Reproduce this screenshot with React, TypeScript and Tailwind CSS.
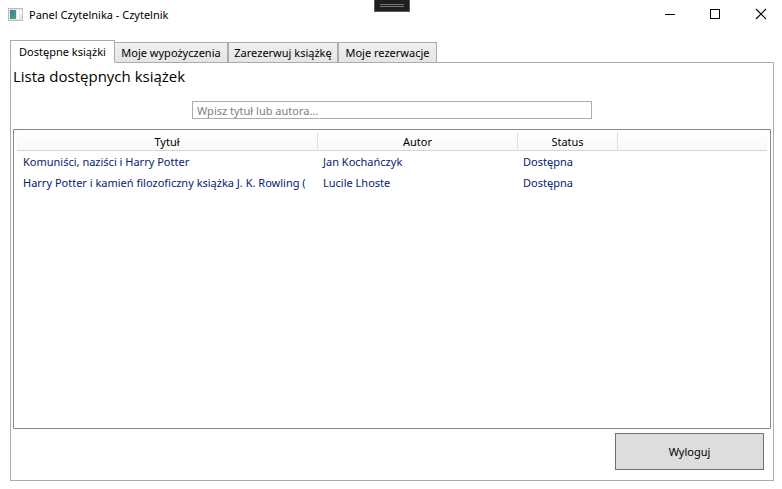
import { useState } from "react";

const tabs = [
  { label: "Dostępne książki", width: "w-[105px]" },
  { label: "Moje wypożyczenia", width: "w-[113px]" },
  { label: "Zarezerwuj książkę", width: "w-[110px]" },
  { label: "Moje rezerwacje", width: "w-[99px]" },
];

const books = [
  { title: "Komuniści, naziści i Harry Potter", author: "Jan Kochańczyk", status: "Dostępna" },
  {
    title: "Harry Potter i kamień filozoficzny książka J. K. Rowling (",
    author: "Lucile Lhoste",
    status: "Dostępna",
  },
];

function AppIcon() {
  return (
    <svg width="15" height="13" viewBox="0 0 15 13" shapeRendering="crispEdges" aria-hidden="true">
      <defs>
        <linearGradient id="screen" x1="0" y1="0" x2="1" y2="1">
          <stop offset="0" stopColor="#3f78b0" />
          <stop offset="1" stopColor="#4fa673" />
        </linearGradient>
      </defs>
      <rect x="0.5" y="0.5" width="14" height="12" fill="#e6e9ec" stroke="#b9bcc2" />
      <rect x="2" y="2" width="6" height="9" fill="url(#screen)" />
      <rect x="9" y="2" width="2" height="9" fill="#ffffff" />
      <rect x="12" y="2" width="2" height="5" fill="#ffffff" />
    </svg>
  );
}

function TitleBar() {
  return (
    <header className="relative flex h-7 shrink-0 items-center pl-2">
      <AppIcon />
      <h1 className="ml-1.5 flex-1 pt-0.5 leading-4">Panel Czytelnika - Czytelnik</h1>
      <div className="absolute top-0 left-1/2 flex h-3 w-9 -translate-x-[17px] flex-col items-center justify-center gap-px border border-t-0 border-[#5c5c5c] bg-[#1f1f1f]">
        <span className="h-px w-6 bg-[#777777]" />
        <span className="h-px w-6 bg-[#777777]" />
      </div>
      <button type="button" aria-label="Minimalizuj" className="flex h-7 w-[45px] items-center justify-center">
        <svg width="10" height="10" viewBox="0 0 10 10" shapeRendering="crispEdges">
          <path d="M0 5.5H10" stroke="#000" />
        </svg>
      </button>
      <button type="button" aria-label="Maksymalizuj" className="flex h-7 w-[45px] items-center justify-center">
        <svg width="10" height="10" viewBox="0 0 10 10" shapeRendering="crispEdges">
          <rect x="0.5" y="0.5" width="9" height="9" fill="none" stroke="#000" />
        </svg>
      </button>
      <button type="button" aria-label="Zamknij" className="flex h-7 w-[45px] items-center justify-center">
        <svg width="10" height="10" viewBox="0 0 10 10" overflow="visible">
          <path d="M1 0L11 10M11 0L1 10" stroke="#000" strokeWidth="1.1" />
        </svg>
      </button>
    </header>
  );
}

export default function App() {
  const [active, setActive] = useState(0);
  const [query, setQuery] = useState("");
  const head = "h-[19px] border-b border-[#d5d5d5] p-0 pt-0.5 text-center font-normal leading-4";
  const divided = "border-l border-l-[#e0e0e0]";
  const cell = "h-[21px] overflow-hidden p-0 px-1.5 leading-4 whitespace-nowrap";

  return (
    <div className="flex min-h-screen flex-col bg-white font-['Noto_Sans','Open_Sans',sans-serif] text-[11px] text-black">
      <TitleBar />
      <main className="flex flex-1 flex-col pt-3 pr-2 pb-2 pl-2.5">
        <div role="tablist" className="-mb-px flex h-[23px] items-end">
          {tabs.map((tab, i) => (
            <button
              key={tab.label}
              type="button"
              role="tab"
              aria-selected={i === active}
              onClick={() => setActive(i)}
              className={`${tab.width} shrink-0 border border-[#acacac] text-center leading-4 whitespace-nowrap ${
                i === active
                  ? "z-10 h-[23px] border-b-white bg-white"
                  : "h-[21px] bg-linear-to-b from-[#f0f0f0] to-[#e5e5e5] " + (i === 1 ? "border-l-0" : "")
              }`}
            >
              {tab.label}
            </button>
          ))}
        </div>
        <section role="tabpanel" className="flex flex-1 flex-col border border-[#acacac] px-0.5">
          <h2 className="mt-0.5 font-['Open_Sans','Noto_Sans',sans-serif] text-[15px] leading-[22px]">
            Lista dostępnych książek
          </h2>
          <input
            type="text"
            aria-label="Szukaj"
            placeholder="Wpisz tytuł lub autora..."
            value={query}
            onChange={(e) => setQuery(e.target.value)}
            className="mx-auto mt-3.5 h-[18px] w-[400px] border border-[#abadb3] px-1 leading-4 outline-none placeholder:text-[#808080]"
          />
          <div className="mt-2.5 flex-1 rounded-[1px] border border-[#828790] px-[3px] pt-0.5">
            <table className="w-full table-fixed border-separate border-spacing-0">
              <colgroup>
                <col className="w-[300px]" />
                <col className="w-[200px]" />
                <col className="w-[100px]" />
                <col />
              </colgroup>
              <thead className="bg-linear-to-b from-white to-[#f7f8f8]">
                <tr>
                  <th className={head}>Tytuł</th>
                  <th className={`${head} ${divided}`}>Autor</th>
                  <th className={`${head} ${divided}`}>Status</th>
                  <td className={`${head} ${divided}`} />
                </tr>
              </thead>
              <tbody className="text-[#042271]">
                {books.map((book) => (
                  <tr key={book.author}>
                    <td className={cell}>
                      <div className="overflow-hidden">{book.title}</div>
                    </td>
                    <td className={cell}>{book.author}</td>
                    <td className={cell}>{book.status}</td>
                    <td />
                  </tr>
                ))}
              </tbody>
            </table>
          </div>
          <button
            type="button"
            className="mt-1 mr-[7px] mb-2.5 h-[37px] w-[149px] self-end border border-[#707070] bg-[#dddddd] pt-0.5"
          >
            Wyloguj
          </button>
        </section>
      </main>
    </div>
  );
}
